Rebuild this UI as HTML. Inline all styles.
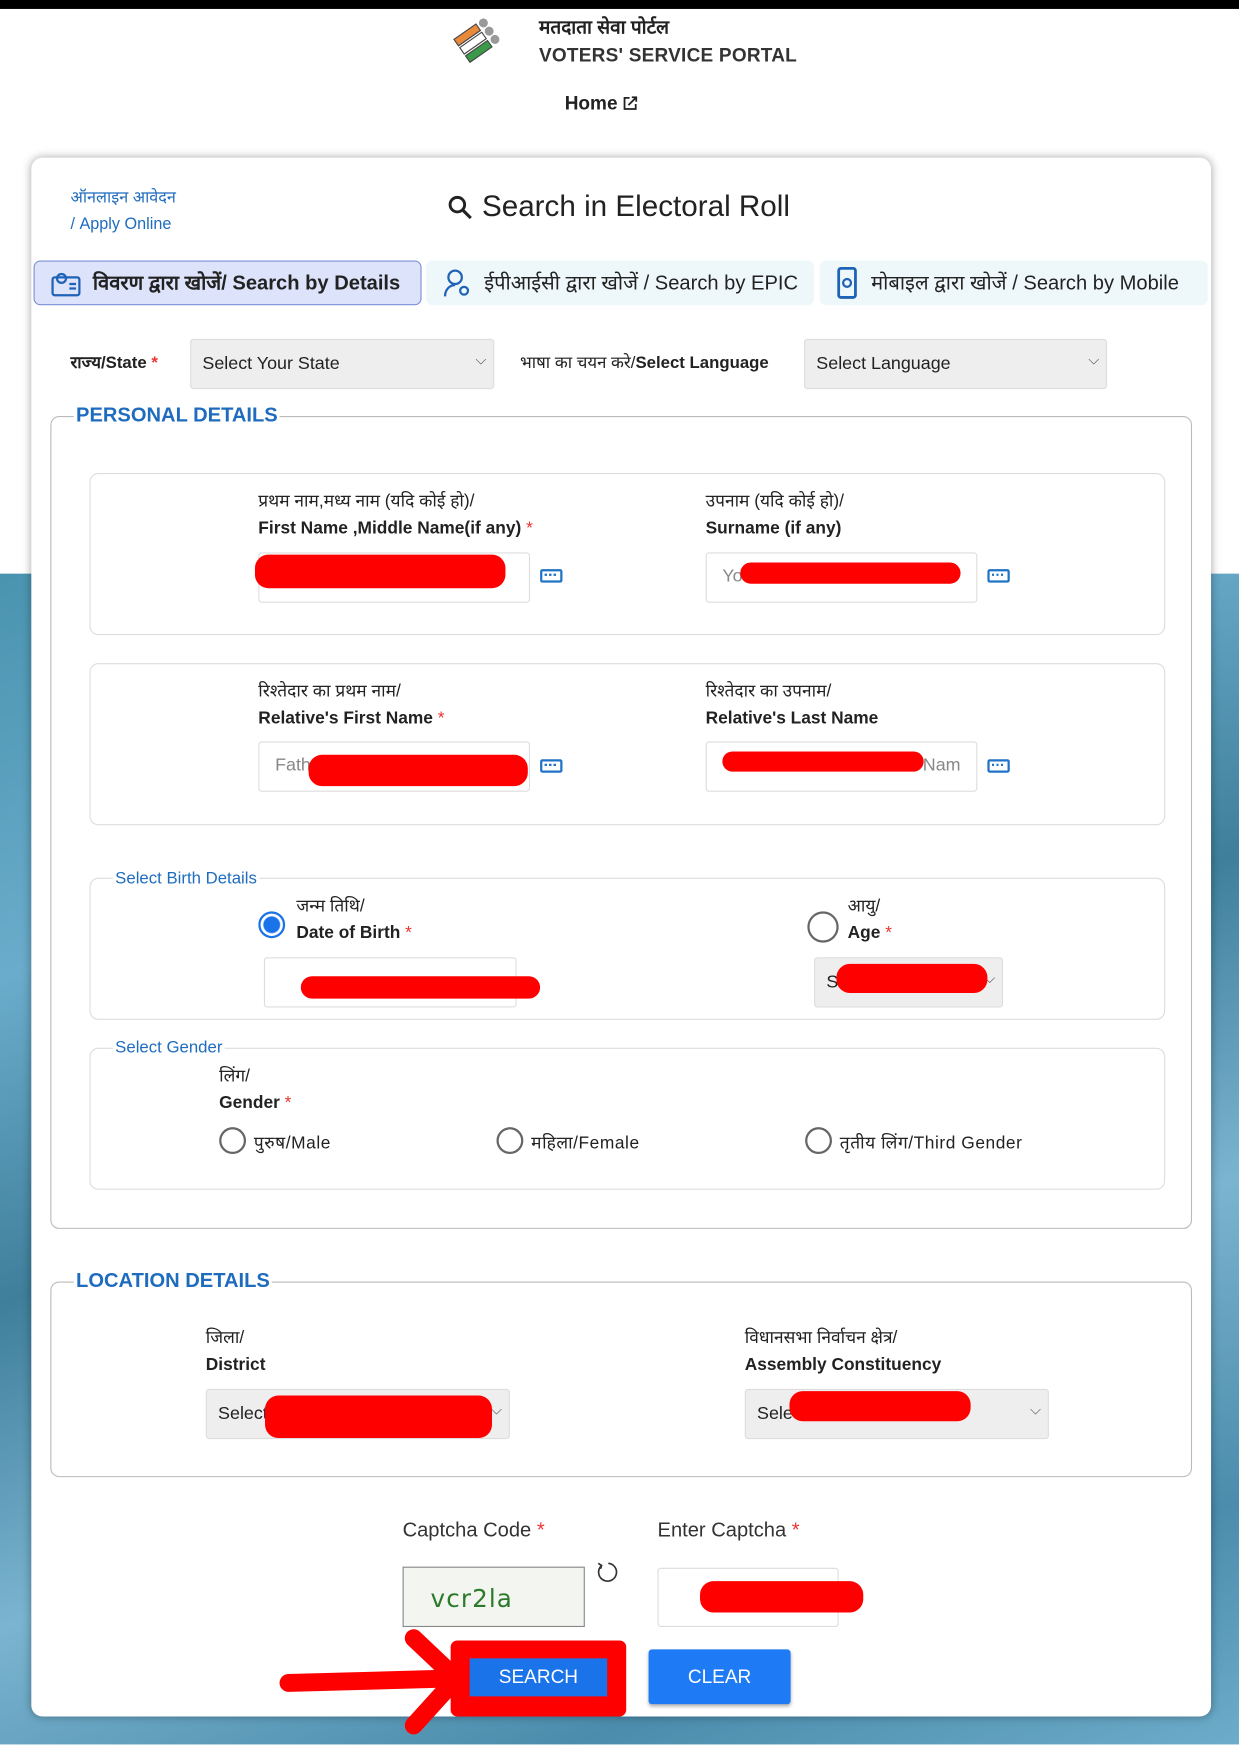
<!DOCTYPE html>
<html><head><meta charset="utf-8"><style>
*{box-sizing:border-box;margin:0;padding:0}
html,body{width:1239px;height:1753px;overflow:hidden;background:#fff}
#w{position:absolute;left:0;top:0;width:1108px;height:1568px;transform:scale(1.11823);transform-origin:0 0;font-family:"Liberation Sans","Noto Sans CJK SC",sans-serif;color:#222}
.a{position:absolute}
.bg{left:0;top:513px;width:1108px;height:1047px;background:linear-gradient(160deg,#4a94b0 0%,#6aaccb 25%,#3f7f9c 45%,#7ab4d0 65%,#4b8cac 85%,#6dacca 100%)}
.card{left:28px;top:141px;width:1055px;height:1394px;background:#fff;border-radius:10px;box-shadow:0 0 8px rgba(0,0,0,.35)}
.blue{color:#1f6cbf}
.tab{top:233px;height:40px;border-radius:6px;font-size:18px;display:flex;align-items:center;gap:10px;padding-left:14px}
.sel{height:45px;background:#eee;border:1px solid #ddd;border-radius:3px;font-size:16px;padding:13px 10px;color:#222}
.sel:after{content:"⌵";position:absolute;right:6px;top:10px;font-size:13px;color:#555}
.fs{border:1px solid #bbb;border-radius:8px}
.box{border:1px solid #ddd;border-radius:8px}
.leg{background:#fff;padding:0 2px}
.lbl{font-size:15.5px}
.b{font-weight:bold}
.st{color:#e33}
.inp{height:45px;border:1px solid #ddd;border-radius:3px;background:#fff;font-size:16px;color:#888;padding:12px 14px}
.red{background:#f00;border-radius:12px}
.kb{width:20px;height:12px;border:2px solid #1f73c6;border-radius:2px;background:repeating-linear-gradient(90deg,#1f73c6 0 2px,transparent 2px 4px) 2px 2px/12px 2px no-repeat}
.rad{width:24px;height:24px;border:2px solid #666;border-radius:50%;background:#fff}
</style></head><body><div id="w">
<div class="a" style="left:0;top:0;width:1108px;height:8px;background:#000"></div>
<div class="a bg"></div>
<svg class="a" style="left:398px;top:8px" width="62" height="54" viewBox="0 0 62 54">
<g transform="rotate(-35 31 27)"><rect x="12" y="14" width="24" height="7" fill="#e98a3a" stroke="#444"/><rect x="12" y="23" width="24" height="7" fill="#fff" stroke="#444"/><rect x="12" y="32" width="24" height="7" fill="#3a9a4a" stroke="#444"/>
<circle cx="42" cy="17" r="4" fill="#999"/><circle cx="42" cy="26" r="4" fill="#999"/><circle cx="42" cy="35" r="4" fill="#999"/></g></svg>
<div class="a b" style="left:482px;top:12px;font-size:17px">मतदाता सेवा पोर्टल</div>
<div class="a b" style="left:482px;top:40px;font-size:17px;letter-spacing:.2px;color:#333">VOTERS' SERVICE PORTAL</div>
<div class="a b" style="left:505px;top:83px;font-size:17px;color:#222">Home <svg width="13" height="13" style="position:relative;top:1px"><path d="M6 1.5H1.5v10h10V7" fill="none" stroke="#222" stroke-width="1.6"/><path d="M5 8l7-7M8 1h4v4" fill="none" stroke="#222" stroke-width="1.6"/></svg></div>
<div class="a card"></div>
<div class="a blue" style="left:63px;top:165px;font-size:14.5px;line-height:24px">ऑनलाइन आवेदन<br>/ Apply Online</div>
<svg class="a" style="left:400px;top:174px" width="24" height="24" viewBox="0 0 24 24"><circle cx="9" cy="9" r="6.5" fill="none" stroke="#222" stroke-width="2.6"/><path d="M14 14l7 7" stroke="#222" stroke-width="2.8"/></svg>
<div class="a" style="left:431px;top:169px;font-size:26.5px;color:#222">Search in Electoral Roll</div>
<div class="a tab b" style="left:30px;width:347px;background:#dde3fb;border:1px solid #7b8fd6"><svg width="28" height="26"><rect x="2" y="8" width="24" height="16" rx="2" fill="none" stroke="#1f63b6" stroke-width="2"/><circle cx="10" cy="9" r="4" fill="none" stroke="#1f63b6" stroke-width="2"/><path d="M17 14h6M17 18h6" stroke="#1f63b6" stroke-width="2"/></svg>विवरण द्वारा खोजें/ Search by Details</div>
<div class="a tab" style="left:381px;width:347px;background:#eef7fa"><svg width="28" height="28"><circle cx="12" cy="9" r="6" fill="none" stroke="#1f63b6" stroke-width="2"/><path d="M3 26c0-6 4-10 9-10" fill="none" stroke="#1f63b6" stroke-width="2"/><circle cx="20" cy="21" r="3.5" fill="none" stroke="#1f63b6" stroke-width="2"/></svg>ईपीआईसी द्वारा खोजें / Search by EPIC</div>
<div class="a tab" style="left:733px;width:347px;background:#eef7fa"><svg width="22" height="30"><rect x="3" y="2" width="15" height="26" rx="2" fill="none" stroke="#1f63b6" stroke-width="2.5"/><circle cx="10.5" cy="15" r="3.5" fill="none" stroke="#1f63b6" stroke-width="2"/></svg>मोबाइल द्वारा खोजें / Search by Mobile</div>
<div class="a b" style="left:63px;top:314px;font-size:15px">राज्य/State <span class="st">*</span></div>
<div class="a sel" style="left:170px;top:303px;width:272px">Select Your State</div>
<div class="a" style="left:465px;top:314px;font-size:15px">भाषा का चयन करे/<b>Select Language</b></div>
<div class="a sel" style="left:719px;top:303px;width:271px">Select Language</div>
<div class="a fs" style="left:45px;top:372px;width:1021px;height:727px"></div>
<div class="a leg b blue" style="left:66px;top:361px;font-size:18px">PERSONAL DETAILS</div>
<div class="a box" style="left:80px;top:423px;width:962px;height:145px"></div>
<div class="a lbl" style="left:231px;top:437px;line-height:24px">प्रथम नाम,मध्य नाम (यदि कोई हो)/<br><b>First Name ,Middle Name(if any)</b> <span class="st">*</span></div>
<div class="a inp" style="left:231px;top:494px;width:243px"></div>
<div class="a red" style="left:228px;top:496px;width:224px;height:30px"></div>
<div class="a kb" style="left:483px;top:509px"></div>
<div class="a lbl" style="left:631px;top:437px;line-height:24px">उपनाम (यदि कोई हो)/<br><b>Surname (if any)</b></div>
<div class="a inp" style="left:631px;top:494px;width:243px">Yo</div>
<div class="a red" style="left:662px;top:503px;width:197px;height:19px"></div>
<div class="a kb" style="left:883px;top:509px"></div>
<div class="a box" style="left:80px;top:593px;width:962px;height:145px"></div>
<div class="a lbl" style="left:231px;top:607px;line-height:24px">रिश्तेदार का प्रथम नाम/<br><b>Relative's First Name</b> <span class="st">*</span></div>
<div class="a inp" style="left:231px;top:663px;width:243px">Fath</div>
<div class="a red" style="left:276px;top:675px;width:196px;height:28px"></div>
<div class="a kb" style="left:483px;top:679px"></div>
<div class="a lbl" style="left:631px;top:607px;line-height:24px">रिश्तेदार का उपनाम/<br><b>Relative's Last Name</b></div>
<div class="a inp" style="left:631px;top:663px;width:243px;text-align:right">Nam</div>
<div class="a red" style="left:646px;top:672px;width:180px;height:18px"></div>
<div class="a kb" style="left:883px;top:679px"></div>
<div class="a box" style="left:80px;top:785px;width:962px;height:127px"></div>
<div class="a leg blue" style="left:101px;top:777px;font-size:15px">Select Birth Details</div>
<div class="a rad" style="left:231px;top:815px;border-color:#1a73e8;background:radial-gradient(#1a73e8 0 7px,#fff 8px)"></div>
<div class="a lbl" style="left:265px;top:799px;line-height:24px">जन्म तिथि/<br><b>Date of Birth</b> <span class="st">*</span></div>
<div class="a inp" style="left:236px;top:856px;width:226px"></div>
<div class="a red" style="left:269px;top:873px;width:214px;height:20px"></div>
<div class="a rad" style="left:722px;top:815px;width:28px;height:28px"></div>
<div class="a lbl" style="left:758px;top:799px;line-height:24px">आयु/<br><b>Age</b> <span class="st">*</span></div>
<div class="a sel" style="left:728px;top:856px;width:169px">S</div>
<div class="a red" style="left:748px;top:862px;width:135px;height:26px"></div>
<div class="a box" style="left:80px;top:937px;width:962px;height:127px"></div>
<div class="a leg blue" style="left:101px;top:928px;font-size:15px">Select Gender</div>
<div class="a lbl" style="left:196px;top:951px;line-height:24px">लिंग/<br><b>Gender</b> <span class="st">*</span></div>
<div class="a rad" style="left:196px;top:1008px"></div><div class="a lbl" style="left:227px;top:1010px;letter-spacing:.5px">पुरुष/Male</div>
<div class="a rad" style="left:444px;top:1008px"></div><div class="a lbl" style="left:475px;top:1010px;letter-spacing:.5px">महिला/Female</div>
<div class="a rad" style="left:720px;top:1008px"></div><div class="a lbl" style="left:751px;top:1010px;letter-spacing:.5px">तृतीय लिंग/Third Gender</div>
<div class="a fs" style="left:45px;top:1146px;width:1021px;height:175px"></div>
<div class="a leg b blue" style="left:66px;top:1135px;font-size:18px">LOCATION DETAILS</div>
<div class="a lbl" style="left:184px;top:1185px;line-height:24px">जिला/<br><b>District</b></div>
<div class="a sel" style="left:184px;top:1242px;width:272px">Select</div>
<div class="a red" style="left:237px;top:1248px;width:203px;height:38px"></div>
<div class="a lbl" style="left:666px;top:1185px;line-height:24px">विधानसभा निर्वाचन क्षेत्र/<br><b>Assembly Constituency</b></div>
<div class="a sel" style="left:666px;top:1242px;width:272px">Sele</div>
<div class="a red" style="left:706px;top:1244px;width:162px;height:27px"></div>
<div class="a" style="left:360px;top:1358px;font-size:18px;color:#333">Captcha Code <span class="st">*</span></div>
<div class="a" style="left:588px;top:1358px;font-size:18px;color:#333">Enter Captcha <span class="st">*</span></div>
<div class="a" style="left:360px;top:1401px;width:163px;height:54px;background:#f3f5f0;border:1px solid #888;color:#2a7a2a;font-size:22px;padding:16px 24px;letter-spacing:1px;font-family:'DejaVu Sans',sans-serif">vcr2la</div>
<svg class="a" style="left:532px;top:1395px" width="22" height="22"><path d="M6 5A8 8 0 1 0 12 3" fill="none" stroke="#333" stroke-width="1.5"/><path d="M3 3l3 2-1 3" fill="none" stroke="#333" stroke-width="1.5"/></svg>
<div class="a" style="left:588px;top:1402px;width:162px;height:53px;border:1px solid #ddd;border-radius:3px"></div>
<div class="a red" style="left:626px;top:1414px;width:146px;height:28px"></div>
<div class="a" style="left:403px;top:1467px;width:157px;height:68px;background:#f00;border-radius:6px"></div>
<div class="a" style="left:420px;top:1483px;width:123px;height:34px;background:#1a73e8;color:#fff;font-size:17px;text-align:center;line-height:34px">SEARCH</div>
<div class="a" style="left:580px;top:1475px;width:127px;height:49px;background:#1e7bf5;color:#fff;font-size:17px;text-align:center;line-height:49px;border-radius:3px;box-shadow:0 2px 3px rgba(0,0,0,.3)">CLEAR</div>
<svg class="a" style="left:240px;top:1455px" width="180" height="100"><path d="M18 50L165 46" stroke="#f00" stroke-width="16" stroke-linecap="round"/><path d="M130 10L168 46L130 88" fill="none" stroke="#f00" stroke-width="16" stroke-linecap="round" stroke-linejoin="round"/></svg>
</div></body></html>
